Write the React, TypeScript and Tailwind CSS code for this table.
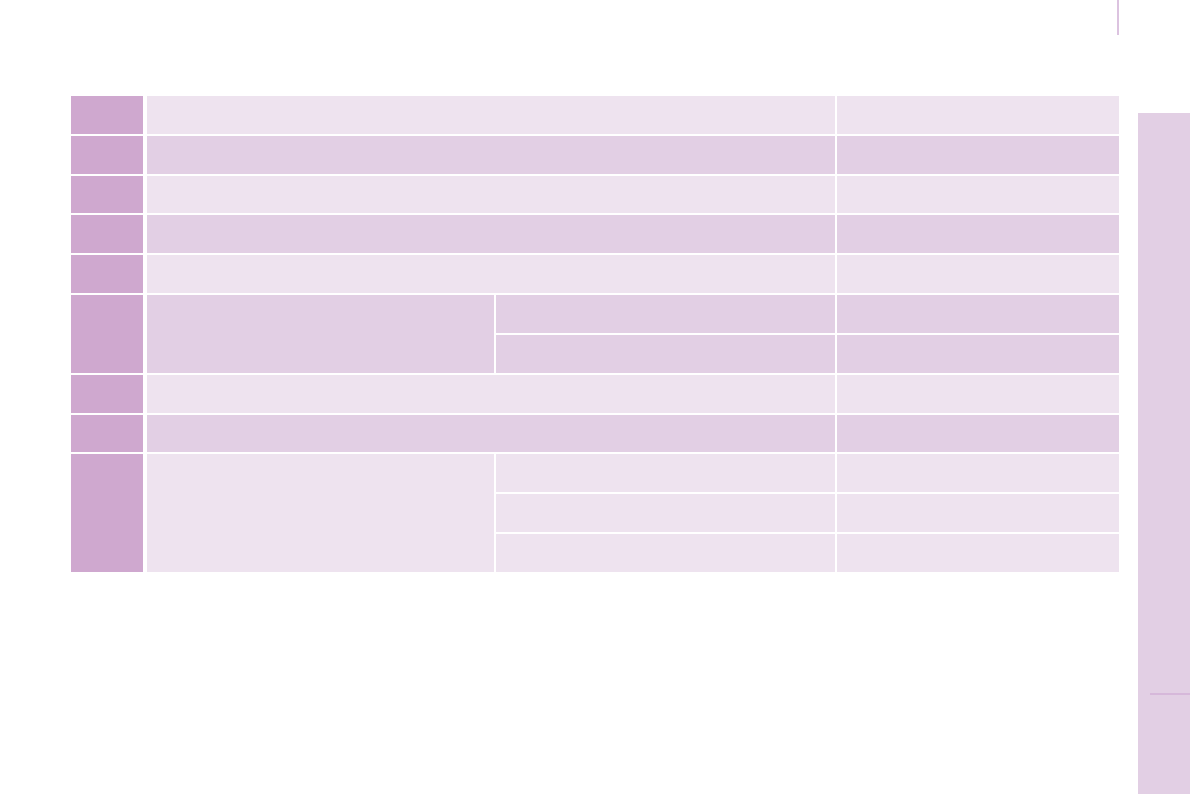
import React from "react";

const L = "bg-[#eee3ef]";
const D = "bg-[#e2cfe4]";
const H = "bg-[#cfa8cf]";

export default function App() {
  return (
    <div className="flex h-[794px] w-[1191px] overflow-hidden bg-white" style={{ fontFamily: '"Liberation Sans", sans-serif' }}>
      <div className="flex w-[1138px] flex-col">
        <div className="flex h-[35px] justify-end pr-[19px]">
          <div className="h-[35px] w-[2px] bg-[#dcc3e0]" />
        </div>
        <div className="ml-[71px] mt-[61px] grid h-[476px] grid-cols-[72px_349px_339px_282px] grid-rows-[repeat(12,1fr)] gap-[2px]">
          {/* row 1 */}
          <div className={H} />
          <div className={`col-span-2 ml-[2px] ${L}`} />
          <div className={L} />
          {/* row 2 */}
          <div className={H} />
          <div className={`col-span-2 ml-[2px] ${D}`} />
          <div className={D} />
          {/* row 3 */}
          <div className={H} />
          <div className={`col-span-2 ml-[2px] ${L}`} />
          <div className={L} />
          {/* row 4 */}
          <div className={H} />
          <div className={`col-span-2 ml-[2px] ${D}`} />
          <div className={D} />
          {/* row 5 */}
          <div className={H} />
          <div className={`col-span-2 ml-[2px] ${L}`} />
          <div className={L} />
          {/* row 6 (two sub rows) */}
          <div className={`row-span-2 ${H}`} />
          <div className={`row-span-2 ml-[2px] ${D}`} />
          <div className={D} />
          <div className={D} />
          <div className={D} />
          <div className={D} />
          {/* row 7 */}
          <div className={H} />
          <div className={`col-span-2 ml-[2px] ${L}`} />
          <div className={L} />
          {/* row 8 */}
          <div className={H} />
          <div className={`col-span-2 ml-[2px] ${D}`} />
          <div className={D} />
          {/* row 9 (three sub rows) */}
          <div className={`row-span-3 ${H}`} />
          <div className={`row-span-3 ml-[2px] ${L}`} />
          <div className={L} />
          <div className={L} />
          <div className={L} />
          <div className={L} />
          <div className={L} />
          <div className={L} />
        </div>
      </div>
      <div className="mt-[113px] flex w-[52px] flex-col bg-[#e2cfe4]">
        <div className="ml-[12px] mt-[580px] h-[2px] bg-[#d6b8da]" />
      </div>
    </div>
  );
}
